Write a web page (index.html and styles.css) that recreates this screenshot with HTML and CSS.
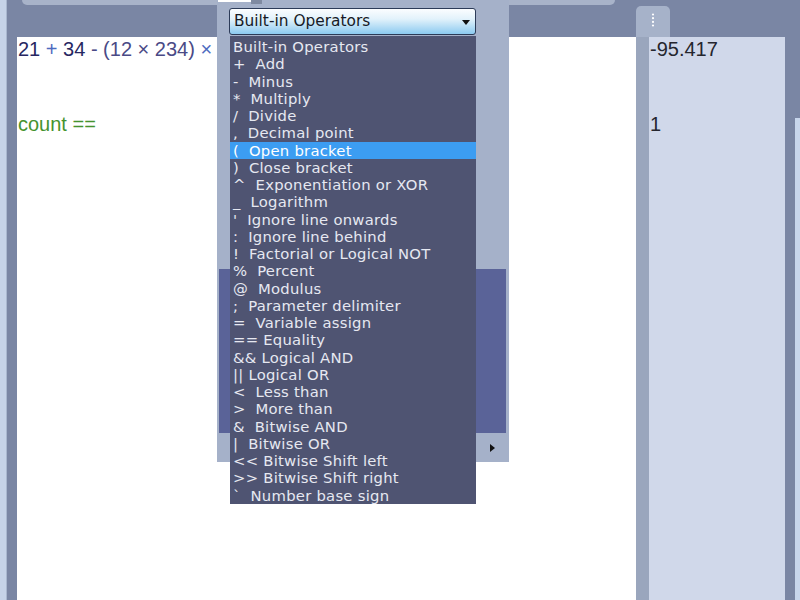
FILE: index.html
```html
<!doctype html>
<html>
 <head>
  <meta charset="utf-8">
  <title>Calculator Sheet</title>
  <link rel="stylesheet" href="styles.css">
 </head>
 <body>
  <div class="app">
    <div class="edge-l"></div>
    <div class="topbar"></div>
    <div class="tab">
      <svg width="4" height="14" viewBox="0 0 4 14"><circle cx="2" cy="1.5" r="1.1" fill="#fff"/><circle cx="2" cy="5.2" r="1.1" fill="#fff"/><circle cx="2" cy="8.9" r="1.1" fill="#fff"/><circle cx="2" cy="12.5" r="1.1" fill="#fff"/></svg>
    </div>

    <div class="editor">
      <div class="line"><span class="num">21</span> <span class="op">+</span> <span class="num">34</span> <span class="grp">- (12 × 234)</span> <span class="op">×</span></div>
      <div class="line"></div>
      <div class="line"></div>
      <div class="line"><span class="var">count ==</span></div>
    </div>
    <div class="split"></div>
    <div class="results">
      <div class="line">-95.417</div>
      <div class="line"></div>
      <div class="line"></div>
      <div class="line">1</div>
    </div>
    <div class="edge-r"></div>

    <div class="popup">
      <div class="stubs"><span class="stub-w"></span><span class="stub-g"></span></div>
      <div class="track"></div>
      <div class="scroll-row"><span class="arrow-r"></span></div>

      <div class="select">Built-in Operators<span class="arrow-d"></span></div>
      <ul class="list">
        <li>Built-in Operators</li>
        <li>+  Add</li>
        <li>-  Minus</li>
        <li>*  Multiply</li>
        <li>/  Divide</li>
        <li>,  Decimal point</li>
        <li class="sel">(  Open bracket</li>
        <li>)  Close bracket</li>
        <li>^  Exponentiation or XOR</li>
        <li>_  Logarithm</li>
        <li>'  Ignore line onwards</li>
        <li>:  Ignore line behind</li>
        <li>!  Factorial or Logical NOT</li>
        <li>%  Percent</li>
        <li>@  Modulus</li>
        <li>;  Parameter delimiter</li>
        <li>=  Variable assign</li>
        <li>== Equality</li>
        <li>&amp;&amp; Logical AND</li>
        <li>|| Logical OR</li>
        <li>&lt;  Less than</li>
        <li>&gt;  More than</li>
        <li>&amp;  Bitwise AND</li>
        <li>|  Bitwise OR</li>
        <li>&lt;&lt; Bitwise Shift left</li>
        <li>&gt;&gt; Bitwise Shift right</li>
        <li>`  Number base sign</li>
      </ul>
    </div>
  </div>
 </body>
</html>
```

FILE: styles.css
```css
body { margin: 0; background: #7a86a4; }

.app {
  position: relative;
  width: 800px;
  height: 600px;
  overflow: hidden;
  display: grid;
  grid-template-columns: 7px 10px 619px 13px 136px 10px 5px;
  grid-template-rows: 37px 563px;
  background: #7a86a4;
  font-family: "Liberation Sans", Arial, sans-serif;
}

.edge-l { grid-column: 1; grid-row: 1 / 3; background: #c6d3e8; border-right: 1px solid #a9b7cf; }
.edge-r { grid-column: 7; grid-row: 1 / 3; background: linear-gradient(#7a86a4 118px, #c8d6ec 118px); }

.topbar {
  grid-column: 2 / 4; grid-row: 1;
  align-self: start;
  height: 5px;
  margin: 0 21px 0 15px;
  background: #a8b3c9;
  border-radius: 0 0 6px 6px;
}

.tab {
  grid-column: 4 / 6; grid-row: 1;
  justify-self: start;
  width: 34px;
  margin-top: 6px;
  background: #a6b2c9;
  border-radius: 5px 5px 0 0;
  display: flex;
  justify-content: center;
  padding-top: 7px;
  box-sizing: border-box;
}

.line { height: 25px; line-height: 25px; font-size: 20px; white-space: pre; }

.editor { grid-column: 3; grid-row: 2; background: #fff; padding-left: 1px; }
.num { color: #272762; }
.op { color: #4d6bbf; }
.grp { color: #4a4a86; }
.var { color: #45932f; }

.split { grid-column: 4; grid-row: 2; background: #9aa6bd; }
.results { grid-column: 5; grid-row: 2; background: #d0d8ea; color: #25262e; padding-left: 1px; }

/* floating operator picker */
.popup {
  position: absolute;
  left: 217px;
  top: 0;
  width: 292px;
  height: 462px;
  background: #a5b1c9;
  display: flex;
  flex-direction: column;
}
.stubs { display: flex; align-items: flex-start; padding-left: 1px; margin-bottom: auto; }
.stub-w { width: 33px; height: 2px; background: #fff; }
.stub-g { width: 11px; height: 4px; background: #7f8aa1; }
.track { height: 164px; margin: 0 3px 0 2px; background: #5a6398; }
.scroll-row { height: 29px; display: flex; align-items: center; justify-content: flex-end; padding-right: 14px; }
.arrow-r { width: 0; height: 0; border-top: 4px solid transparent; border-bottom: 4px solid transparent; border-left: 5px solid #111; }

.select {
  position: absolute;
  left: 12px;
  top: 8px;
  width: 247px;
  height: 27px;
  box-sizing: border-box;
  border: 1px solid #2c3b58;
  border-radius: 3px;
  background: linear-gradient(#fbfdff, #e2f2fb 40%, #8ccaf0);
  font: 15.4px/25px "DejaVu Sans", Verdana, sans-serif;
  color: #161a26;
  padding-left: 4px;
}
.arrow-d {
  position: absolute;
  right: 5px;
  top: 11px;
  width: 0; height: 0;
  border-left: 4px solid transparent;
  border-right: 4px solid transparent;
  border-top: 5px solid #111;
}

.list {
  position: absolute;
  left: 13px;
  top: 36px;
  width: 246px;
  margin: 0;
  padding: 2px 0 0;
  list-style: none;
  background: #4f5472;
  color: #e6e8f1;
  font: 14.8px/17.25px "DejaVu Sans", Verdana, sans-serif;
  letter-spacing: 0.25px;
}
.list li { white-space: pre; padding-left: 3px; height: 17.25px; }
.list li.sel { background: #3c9df2; color: #fff; }
```
